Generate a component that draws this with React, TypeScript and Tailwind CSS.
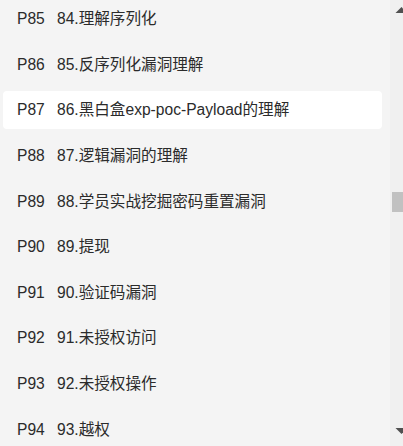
const lessons = [
  { p: "P85", title: "84.理解序列化" },
  { p: "P86", title: "85.反序列化漏洞理解" },
  { p: "P87", title: "86.黑白盒exp-poc-Payload的理解", active: true },
  { p: "P88", title: "87.逻辑漏洞的理解" },
  { p: "P89", title: "88.学员实战挖掘密码重置漏洞" },
  { p: "P90", title: "89.提现" },
  { p: "P91", title: "90.验证码漏洞" },
  { p: "P92", title: "91.未授权访问" },
  { p: "P93", title: "92.未授权操作" },
  { p: "P94", title: "93.越权" },
];

export default function App() {
  return (
    <div
      className="flex w-[403px] h-[446px] overflow-hidden bg-[#f4f4f4] text-[#2b2b2b]"
      style={{ fontFamily: '"Liberation Sans", "Noto Sans CJK SC", sans-serif' }}
    >
      <div className="flex-1 flex flex-col gap-[7.6px] pl-[3px] pr-[8px]">
        {lessons.map((item) => (
          <div
            key={item.p}
            className={
              item.active
                ? "flex items-center h-[38px] shrink-0 pl-[14px] rounded-[4px] bg-white text-[15.6px]"
                : "flex items-center h-[38px] shrink-0 pl-[14px] rounded-[4px] text-[15.6px]"
            }
          >
            <span className="w-[40px] shrink-0">{item.p}</span>
            <span className="whitespace-nowrap">{item.title}</span>
          </div>
        ))}
      </div>

      {/* scrollbar, cut off by the window edge */}
      <div className="w-[13px] shrink-0 bg-[#f0f0f0] flex flex-col">
        <svg width="13" height="17" viewBox="0 0 13 17" className="block shrink-0">
          <polygon points="5.5,13 11.5,7 17.5,13" fill="#505050" />
        </svg>
        <div className="mt-[175px] ml-[2px] h-[20px] w-[11px] bg-[#c1c1c1]" />
        <div className="flex-1" />
        <svg width="13" height="18" viewBox="0 0 13 18" className="block shrink-0">
          <polygon points="5.5,0 11.5,6 17.5,0" fill="#505050" />
        </svg>
      </div>
    </div>
  );
}
